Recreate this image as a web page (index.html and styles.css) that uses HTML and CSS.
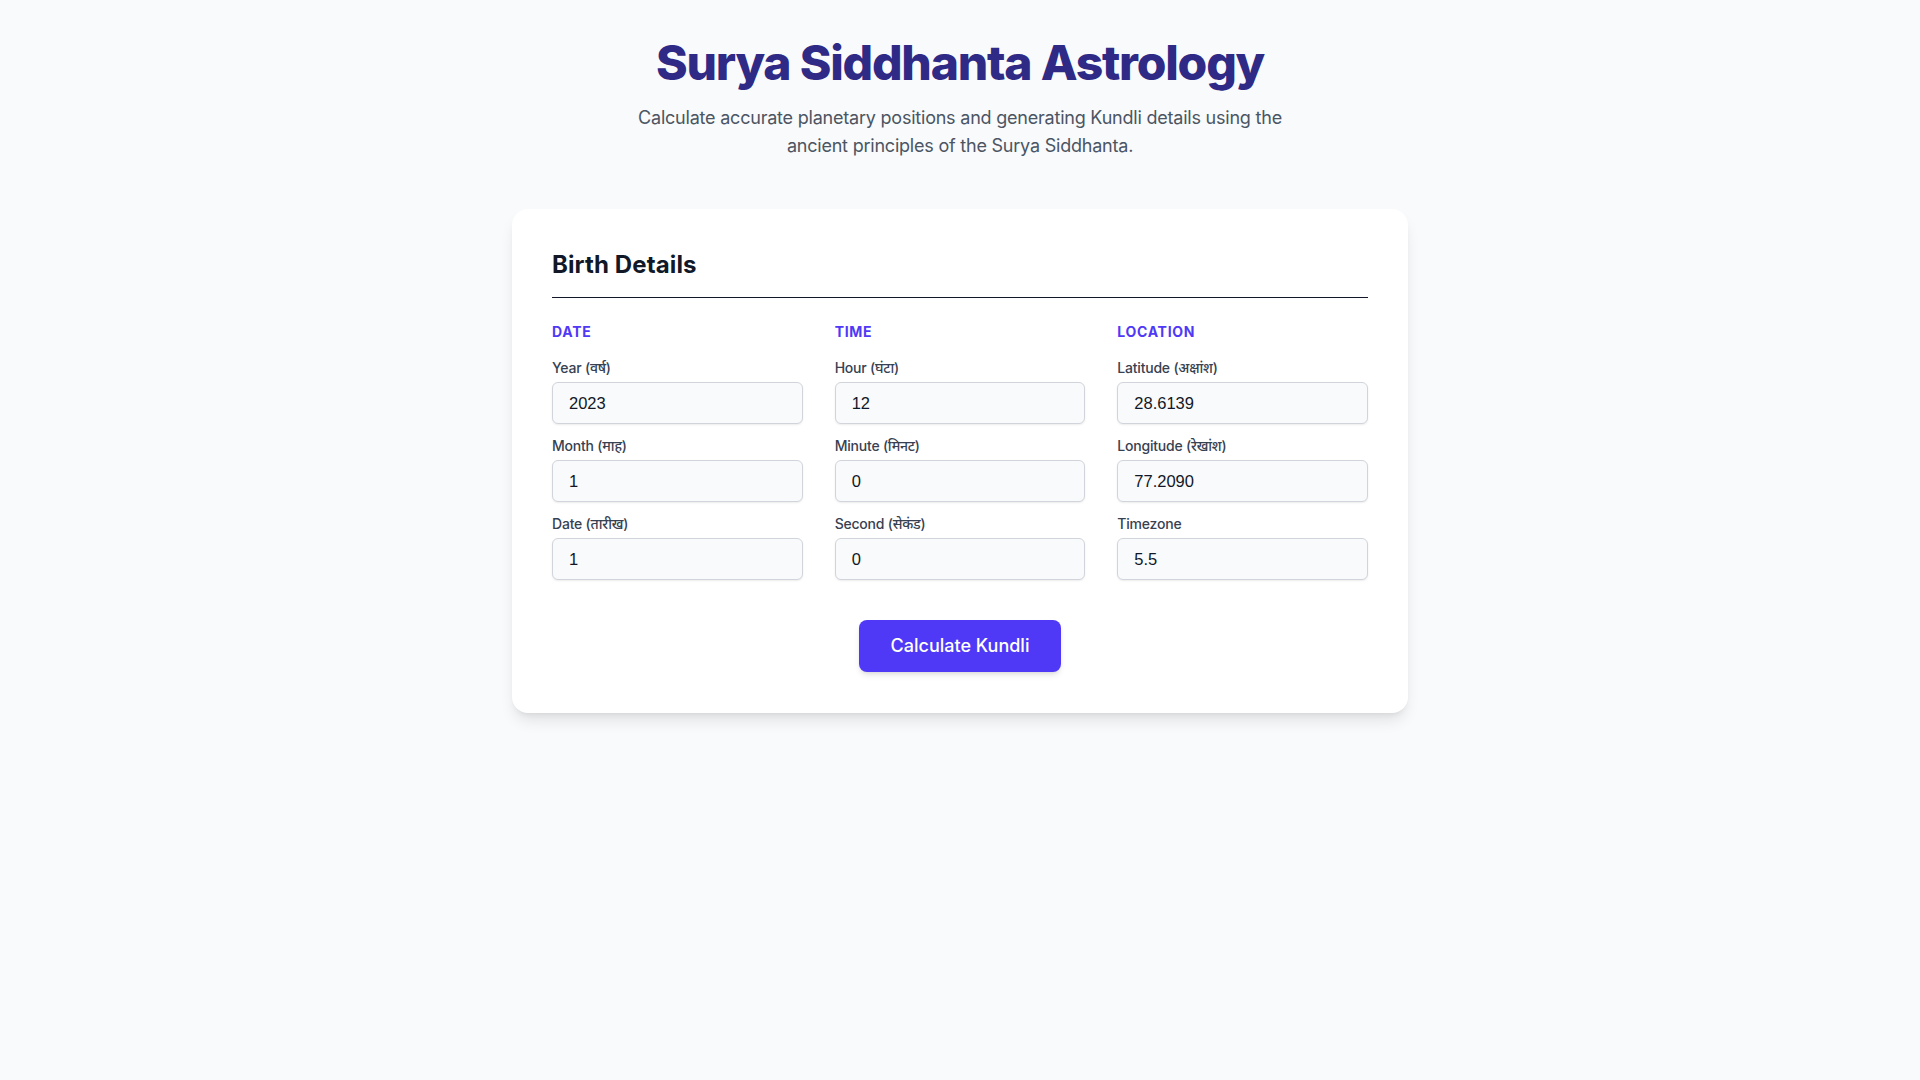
FILE: index.html
```html
<!DOCTYPE html>
<html lang="en">
<head>
<meta charset="utf-8">
<title>Surya Siddhanta Astrology</title>
<link rel="stylesheet" href="styles.css">
</head>
<body>
<main class="page">
  <header class="hero">
    <h1 class="title">Surya Siddhanta Astrology</h1>
    <p class="subtitle">Calculate accurate planetary positions and generating Kundli details using the ancient principles of the Surya Siddhanta.</p>
  </header>

  <section class="card">
    <h2 class="card-title">Birth Details</h2>
    <hr class="divider">
    <div class="grid">
      <div class="col">
        <h3 class="group-title">Date</h3>
        <div class="field">
          <label class="label">Year (वर्ष)</label>
          <input class="input" type="text" value="2023">
        </div>
        <div class="field">
          <label class="label">Month (माह)</label>
          <input class="input" type="text" value="1">
        </div>
        <div class="field">
          <label class="label">Date (तारीख)</label>
          <input class="input" type="text" value="1">
        </div>
      </div>
      <div class="col">
        <h3 class="group-title">Time</h3>
        <div class="field">
          <label class="label">Hour (घंटा)</label>
          <input class="input" type="text" value="12">
        </div>
        <div class="field">
          <label class="label">Minute (मिनट)</label>
          <input class="input" type="text" value="0">
        </div>
        <div class="field">
          <label class="label">Second (सेकंड)</label>
          <input class="input" type="text" value="0">
        </div>
      </div>
      <div class="col">
        <h3 class="group-title">Location</h3>
        <div class="field">
          <label class="label">Latitude (अक्षांश)</label>
          <input class="input" type="text" value="28.6139">
        </div>
        <div class="field">
          <label class="label">Longitude (रेखांश)</label>
          <input class="input" type="text" value="77.2090">
        </div>
        <div class="field">
          <label class="label">Timezone</label>
          <input class="input" type="text" value="5.5">
        </div>
      </div>
    </div>
    <div class="actions">
      <button class="btn" type="button">Calculate Kundli</button>
    </div>
  </section>
</main>
</body>
</html>
```
FILE: styles.css
```css
* { box-sizing: border-box; }
html, body { margin: 0; padding: 0; }
body {
  background: #f9fafb;
  font-family: Inter, "Noto Sans", "Noto Sans CJK SC", sans-serif;
  color: #111827;
}
.page {
  display: flex;
  flex-direction: column;
  align-items: center;
  padding: 39px 16px 40px;
}
.hero {
  text-align: center;
  display: flex;
  flex-direction: column;
  align-items: center;
}
.title {
  margin: 0;
  font-size: 48px;
  line-height: 48px;
  font-weight: 800;
  letter-spacing: -0.025em;
  color: #2f2a85;
}
.subtitle {
  margin: 17px 0 0;
  max-width: 672px;
  font-size: 18px;
  line-height: 28px;
  letter-spacing: -0.012em;
  color: #4b5563;
}
.card {
  margin-top: 49px;
  width: 896px;
  background: #ffffff;
  border-radius: 16px;
  padding: 40px 40px 41px;
  box-shadow: 0 10px 15px -3px rgba(0,0,0,0.1), 0 4px 6px -4px rgba(0,0,0,0.1);
}
.card-title {
  margin: 0;
  font-size: 24px;
  line-height: 32px;
  font-weight: 700;
  letter-spacing: 0.005em;
  color: #111827;
}
.divider {
  margin: 16px 0 0;
  height: 0;
  border: 0;
  border-top: 1px solid #111827;
}
.grid {
  margin-top: 24px;
  display: grid;
  grid-template-columns: repeat(3, 1fr);
  column-gap: 32px;
}
.col {
  display: flex;
  flex-direction: column;
  gap: 12px;
}
.group-title {
  margin: 0 0 4px;
  font-size: 14px;
  line-height: 20px;
  font-weight: 700;
  text-transform: uppercase;
  letter-spacing: 0.05em;
  color: #4f39f6;
}
.field {
  display: flex;
  flex-direction: column;
  gap: 4px;
}
.label {
  font-size: 14px;
  line-height: 20px;
  font-weight: 500;
  letter-spacing: -0.015em;
  color: #374151;
}
.input {
  height: 42px;
  width: 100%;
  padding: 8px 16px;
  font-family: "Liberation Sans", Arial, sans-serif;
  font-size: 16.5px;
  color: #111827;
  background: #f9fafb;
  border: 1px solid #d1d5db;
  border-radius: 6px;
  box-shadow: 0 1px 2px 0 rgba(0,0,0,0.08);
  outline: none;
}
.actions {
  margin-top: 40px;
  display: flex;
  justify-content: center;
}
.btn {
  font-family: Inter, "Noto Sans", sans-serif;
  font-size: 18px;
  line-height: 28px;
  font-weight: 500;
  color: #ffffff;
  background: #4f39f6;
  border: 0;
  border-radius: 8px;
  padding: 12px 32px;
  box-shadow: 0 4px 6px -1px rgba(0,0,0,0.1), 0 2px 4px -2px rgba(0,0,0,0.1);
  cursor: pointer;
}
```
